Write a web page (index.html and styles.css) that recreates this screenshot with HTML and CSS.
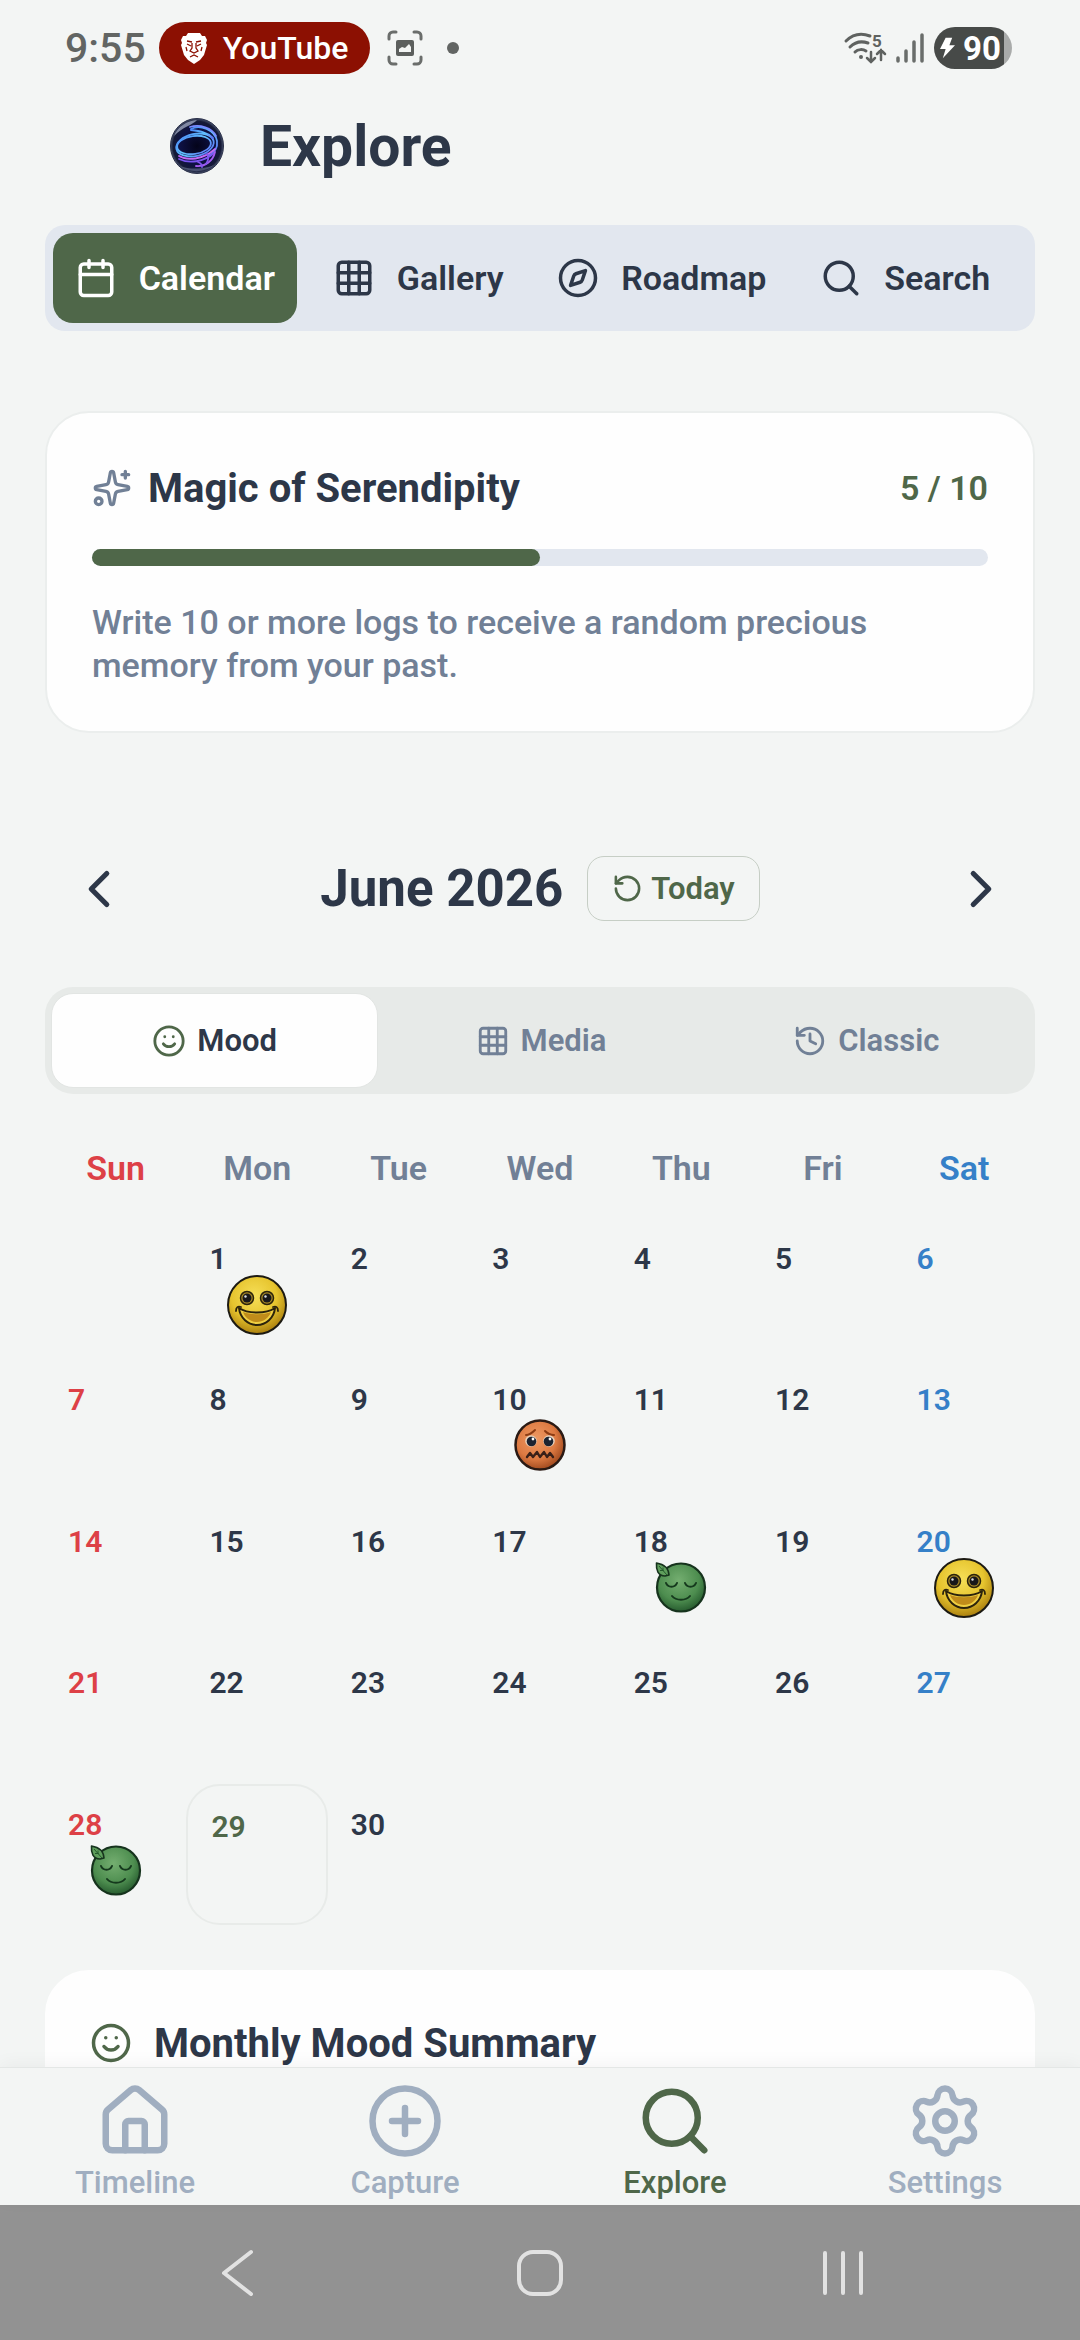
FILE: index.html
```
<!DOCTYPE html>
<html lang="en">
<head>
    <meta charset="UTF-8">
    <meta name="viewport" content="width=device-width, initial-scale=1">
    <title>Explore</title>
    <link rel="stylesheet" href="styles.css">
</head>
<body>
    <!-- shared icons and mood faces -->
    <svg class="sprite" aria-hidden="true">
        <defs>
            <radialGradient id="yellow-fill" cx="45%" cy="35%" r="65%">
                <stop offset="0" stop-color="#f6df58"/>
                <stop offset="0.6" stop-color="#e6c42e"/>
                <stop offset="1" stop-color="#ab800f"/>
            </radialGradient>
            <radialGradient id="orange-fill" cx="42%" cy="38%" r="62%">
                <stop offset="0" stop-color="#ee9a64"/>
                <stop offset="0.65" stop-color="#dd7a42"/>
                <stop offset="1" stop-color="#a44c20"/>
            </radialGradient>
            <radialGradient id="green-fill" cx="45%" cy="35%" r="65%">
                <stop offset="0" stop-color="#74ae70"/>
                <stop offset="0.65" stop-color="#4d8d4f"/>
                <stop offset="1" stop-color="#275c2f"/>
            </radialGradient>
            <radialGradient id="orb-fill" cx="50%" cy="50%" r="50%">
                <stop offset="0" stop-color="#04041a"/>
                <stop offset="0.65" stop-color="#0e1144"/>
                <stop offset="0.9" stop-color="#151a36"/>
                <stop offset="1" stop-color="#4a5470"/>
            </radialGradient>
            <linearGradient id="orb-ring" x1="0" y1="0" x2="1" y2="1">
                <stop offset="0" stop-color="#4a86f5"/>
                <stop offset="0.5" stop-color="#62c4ff"/>
                <stop offset="1" stop-color="#5c6cf5"/>
            </linearGradient>
        </defs>
        <symbol id="icon-calendar" viewBox="0 0 24 24">
            <path d="M8 2v4M16 2v4M3 10h18"/>
            <rect x="3" y="4" width="18" height="18" rx="2"/>
        </symbol>
        <symbol id="icon-grid" viewBox="0 0 24 24">
            <rect x="3" y="3" width="18" height="18" rx="2"/>
            <path d="M3 9h18M3 15h18M9 3v18M15 3v18"/>
        </symbol>
        <symbol id="icon-compass" viewBox="0 0 24 24">
            <circle cx="12" cy="12" r="10"/>
            <path d="m16.24 7.76-1.804 5.411a2 2 0 0 1-1.265 1.265L7.76 16.24l1.804-5.411a2 2 0 0 1 1.265-1.265z"/>
        </symbol>
        <symbol id="icon-search" viewBox="0 0 24 24">
            <circle cx="11" cy="11" r="8"/>
            <path d="m21 21-4.34-4.34"/>
        </symbol>
        <symbol id="icon-sparkles" viewBox="0 0 24 24">
            <path d="M11.017 2.814a1 1 0 0 1 1.966 0l1.051 5.558a2 2 0 0 0 1.594 1.594l5.558 1.051a1 1 0 0 1 0 1.966l-5.558 1.051a2 2 0 0 0-1.594 1.594l-1.051 5.558a1 1 0 0 1-1.966 0l-1.051-5.558a2 2 0 0 0-1.594-1.594l-5.558-1.051a1 1 0 0 1 0-1.966l5.558-1.051a2 2 0 0 0 1.594-1.594z"/>
            <path d="M20 2v4M22 4h-4"/>
            <circle cx="4" cy="20" r="2"/>
        </symbol>
        <symbol id="icon-left" viewBox="0 0 24 24"><path d="m15 18-6-6 6-6"/></symbol>
        <symbol id="icon-right" viewBox="0 0 24 24"><path d="m9 18 6-6-6-6"/></symbol>
        <symbol id="icon-reset" viewBox="0 0 24 24">
            <path d="M3 12a9 9 0 1 0 9-9 9.75 9.75 0 0 0-6.74 2.74L3 8"/>
            <path d="M3 3v5h5"/>
        </symbol>
        <symbol id="icon-history" viewBox="0 0 24 24">
            <path d="M3 12a9 9 0 1 0 9-9 9.75 9.75 0 0 0-6.74 2.74L3 8"/>
            <path d="M3 3v5h5M12 7v5l4 2"/>
        </symbol>
        <symbol id="icon-smile" viewBox="0 0 24 24">
            <circle cx="12" cy="12" r="10"/>
            <path d="M8 14s1.5 2 4 2 4-2 4-2M9 9h.01M15 9h.01"/>
        </symbol>
        <symbol id="icon-home" viewBox="0 0 24 24">
            <path d="M15 21v-8a1 1 0 0 0-1-1h-4a1 1 0 0 0-1 1v8"/>
            <path d="M3 10a2 2 0 0 1 .709-1.528l7-5.999a2 2 0 0 1 2.582 0l7 5.999A2 2 0 0 1 21 10v9a2 2 0 0 1-2 2H5a2 2 0 0 1-2-2z"/>
        </symbol>
        <symbol id="icon-plus" viewBox="0 0 24 24">
            <circle cx="12" cy="12" r="10"/>
            <path d="M8 12h8M12 8v8"/>
        </symbol>
        <symbol id="icon-settings" viewBox="0 0 24 24">
            <path d="M9.671 4.136a2.34 2.34 0 0 1 4.659 0 2.34 2.34 0 0 0 3.319 1.915 2.34 2.34 0 0 1 2.33 4.033 2.34 2.34 0 0 0 0 3.831 2.34 2.34 0 0 1-2.33 4.033 2.34 2.34 0 0 0-3.319 1.915 2.34 2.34 0 0 1-4.659 0 2.34 2.34 0 0 0-3.32-1.915 2.34 2.34 0 0 1-2.33-4.033 2.34 2.34 0 0 0 0-3.831A2.34 2.34 0 0 1 6.35 6.051a2.34 2.34 0 0 0 3.319-1.915"/>
            <circle cx="12" cy="12" r="3"/>
        </symbol>

        <symbol id="face-happy" viewBox="0 0 60 60">
            <circle cx="30" cy="30" r="29" fill="url(#yellow-fill)" stroke="#1c1a12" stroke-width="2"/>
            <g stroke="#2b230c" stroke-width="1.5">
                <circle cx="20" cy="23" r="6.5" fill="#a98a26"/>
                <circle cx="40" cy="23" r="6.5" fill="#a98a26"/>
            </g>
            <circle cx="20" cy="23" r="4.5" fill="#17171a"/>
            <circle cx="40" cy="23" r="4.5" fill="#17171a"/>
            <circle cx="18.5" cy="21.5" r="1.2" fill="#d8dbe0"/>
            <circle cx="38.5" cy="21.5" r="1.2" fill="#d8dbe0"/>
            <path d="M12 33c9 6 27 6 36 0-1 10-9 17-18 17s-17-7-18-17z" fill="#efcf42" stroke="#2b230c" stroke-width="2" stroke-linejoin="round"/>
            <path d="M16 37c8 3 20 3 28 0-2 6-8 10-14 10s-12-4-14-10z" fill="#c08c1a"/>
            <path d="M9 36c0-4 2-5 5-4M51 36c0-4-2-5-5-4" fill="none" stroke="#2b230c" stroke-width="1.8" stroke-linecap="round"/>
        </symbol>
        <symbol id="face-anxious" viewBox="0 0 52 52">
            <circle cx="26" cy="26" r="24.5" fill="url(#orange-fill)" stroke="#2a1a14" stroke-width="2.5"/>
            <path d="M12 16c4 0 6-2 9-5M31 12c3 3 6 4 9 4" fill="none" stroke="#8d3c14" stroke-width="2" stroke-linecap="round"/>
            <circle cx="17" cy="22" r="5.8" fill="#e8d2bd"/>
            <circle cx="35" cy="22" r="5.8" fill="#e8d2bd"/>
            <circle cx="17.5" cy="22.5" r="4.8" fill="#1b2230"/>
            <circle cx="34.5" cy="22.5" r="4.8" fill="#1b2230"/>
            <circle cx="19" cy="20" r="1.4" fill="#fff"/>
            <circle cx="36" cy="20" r="1.4" fill="#fff"/>
            <path d="M13 38l3-4 3 4 4-5 3 5 4-5 3 5 3-4 3 4" fill="none" stroke="#3a2018" stroke-width="2.4" stroke-linecap="round" stroke-linejoin="round"/>
        </symbol>
        <symbol id="face-calm" viewBox="0 0 52 52">
            <circle cx="26" cy="26.500" r="24" fill="url(#green-fill)" stroke="#16331d" stroke-width="2.2"/>
            <path d="M1.500 2c6 1 12 4 12.500 12l-4 1C3 15 1 9 1.500 2z" fill="#5f9e5c" stroke="#16331d" stroke-width="1.6" stroke-linejoin="round"/>
            <path d="M4 5l8 9M8 6.500v3.500M5 9.500h3.500" fill="none" stroke="#245a2c" stroke-width="1"/>
            <path d="M11 22c2 5 9 5 11 0M30 22c2 5 9 5 11 0" fill="none" stroke="#15391d" stroke-width="2" stroke-linecap="round"/>
            <path d="M17 35c4 5 14 5 18 0" fill="none" stroke="#15391d" stroke-width="2" stroke-linecap="round"/>
        </symbol>
    </svg>

    <div class="status-bar">
        <span class="clock">9:55</span>
        <span class="now-playing">
            <svg class="lion" viewBox="0 0 26 31">
                <path d="M7 0h12l2 3h3l2 4-1 3 1 2-3 10-4 5-6 4-6-4-4-5L0 12l1-2-1-3 2-4h3z" fill="#fff"/>
                <path d="M6 8l5 1M20 8l-5 1M6 11l4 2M20 11l-4 2M11 10v5l-2 3 4 2 4-2-2-3v-5M9 24l4-2 4 2M5 14l1 4M21 14l-1 4" fill="none" stroke="#8c1002" stroke-width="1.300"/>
            </svg>
            YouTube
        </span>
        <svg class="capture-icon" viewBox="0 0 36 36" fill="none" stroke="#6a6d6b" stroke-width="3" stroke-linecap="round">
            <path d="M2 9V6a4 4 0 0 1 4-4h3M27 2h3a4 4 0 0 1 4 4v3M34 27v3a4 4 0 0 1-4 4h-3M9 34H6a4 4 0 0 1-4-4v-3"/>
            <rect x="9" y="10" width="18" height="16" rx="2" fill="#5c5f5d" stroke="none"/>
            <path d="M12 22v-3l3-2 3 1 4-4 2 3v5z" fill="#f3f5f4" stroke="none"/>
        </svg>
        <span class="dot"></span>
        <svg class="wifi-icon" viewBox="0 0 44 32" fill="none" stroke="#5f6260" stroke-width="3" stroke-linecap="round">
            <path d="M2 9c7-7 16-8 24-5M6 15c5-5 12-6 18-4M11 20c3-3 8-3 11-1"/>
            <circle cx="17" cy="25" r="2" fill="#5f6260" stroke="none"/>
            <path d="M27 20v10M23 26l4 4 4-4M37 28V18M33 22l4-4 4 4" stroke-width="2.500"/>
            <text x="28" y="15" class="wifi-band">5</text>
        </svg>
        <svg class="signal-icon" viewBox="0 0 28 30" stroke="#6a6d6b" stroke-width="3.500" stroke-linecap="round">
            <path d="M2 25v3M10 18v10M18 9v19M26 2v26"/>
        </svg>
        <span class="battery">
            <svg class="bolt" viewBox="0 0 16 22"><path d="M6 0h7l-3 8h6L3 22l3-10H0z" fill="#fff"/></svg>90
        </span>
    </div>

    <main class="content">
        <header class="page-header">
            <svg class="orb" viewBox="0 0 54 56">
                <ellipse cx="27" cy="28" rx="26.500" ry="27.500" fill="url(#orb-fill)" stroke="#2a3048"/>
                <path d="M4 18C8 8 17 3 27 2c-4 5-15 7-23 16z" fill="#a5afc8" opacity="0.75"/>
                <path d="M10 48c9 7 25 7 34-1-8 4-24 5-34 1z" fill="#7c88a8" opacity="0.5"/>
                <g fill="none" stroke="url(#orb-ring)" stroke-width="1.800" stroke-linecap="round">
                    <ellipse cx="24" cy="27" rx="17" ry="9" transform="rotate(-8 24 27)"/>
                    <ellipse cx="25" cy="27" rx="19" ry="11" transform="rotate(-12 25 27)"/>
                    <path d="M21 11c9-5 24 1 26 12 1 7-3 12-9 15"/>
                    <path d="M20 9c10-3 22 1 26 9" stroke="#7a8cff"/>
                    <path d="M21 12c8 1 16 2 22 8"/>
                    <path d="M9 38c8 5 24 4 36-7" stroke="#c56bf5"/>
                    <path d="M9 41c10 5 25 3 35-6" stroke="#7a55f0"/>
                    <path d="M26 48c9 1 17-5 19-14" stroke="#a65cf0"/>
                    <path d="M28 44c3 1 4 3 4 5M37 36c2 3 1 7-1 10" stroke="#8257ee"/>
                </g>
            </svg>
            <h1>Explore</h1>
        </header>

        <nav class="view-tabs">
            <button class="view-tab active"><svg class="icon"><use href="#icon-calendar"/></svg>Calendar</button>
            <button class="view-tab"><svg class="icon"><use href="#icon-grid"/></svg>Gallery</button>
            <button class="view-tab"><svg class="icon"><use href="#icon-compass"/></svg>Roadmap</button>
            <button class="view-tab"><svg class="icon"><use href="#icon-search"/></svg>Search</button>
        </nav>

        <section class="card">
            <div class="card-head">
                <svg class="icon"><use href="#icon-sparkles"/></svg>
                <h2>Magic of Serendipity</h2>
                <span class="count">5 / 10</span>
            </div>
            <div class="progress"><div class="progress-fill" style="width: 50%"></div></div>
            <p>Write 10 or more logs to receive a random precious memory from your past.</p>
        </section>

        <div class="month-nav">
            <button class="arrow" aria-label="Previous month"><svg class="icon"><use href="#icon-left"/></svg></button>
            <div class="month">
                <h2>June 2026</h2>
                <button class="today-btn"><svg class="icon"><use href="#icon-reset"/></svg>Today</button>
            </div>
            <button class="arrow" aria-label="Next month"><svg class="icon"><use href="#icon-right"/></svg></button>
        </div>

        <div class="mode-tabs">
            <button class="mode-tab active"><svg class="icon"><use href="#icon-smile"/></svg>Mood</button>
            <button class="mode-tab"><svg class="icon"><use href="#icon-grid"/></svg>Media</button>
            <button class="mode-tab"><svg class="icon"><use href="#icon-history"/></svg>Classic</button>
        </div>

        <table class="calendar">
            <thead>
                <tr><th>Sun</th><th>Mon</th><th>Tue</th><th>Wed</th><th>Thu</th><th>Fri</th><th>Sat</th></tr>
            </thead>
            <tbody>
                <tr>
                    <td></td>
                    <td><button class="day">1<svg class="face face-large"><use href="#face-happy"/></svg></button></td>
                    <td><button class="day">2</button></td>
                    <td><button class="day">3</button></td>
                    <td><button class="day">4</button></td>
                    <td><button class="day">5</button></td>
                    <td><button class="day">6</button></td>
                </tr>
                <tr>
                    <td><button class="day">7</button></td>
                    <td><button class="day">8</button></td>
                    <td><button class="day">9</button></td>
                    <td><button class="day">10<svg class="face"><use href="#face-anxious"/></svg></button></td>
                    <td><button class="day">11</button></td>
                    <td><button class="day">12</button></td>
                    <td><button class="day">13</button></td>
                </tr>
                <tr>
                    <td><button class="day">14</button></td>
                    <td><button class="day">15</button></td>
                    <td><button class="day">16</button></td>
                    <td><button class="day">17</button></td>
                    <td><button class="day">18<svg class="face"><use href="#face-calm"/></svg></button></td>
                    <td><button class="day">19</button></td>
                    <td><button class="day">20<svg class="face face-large"><use href="#face-happy"/></svg></button></td>
                </tr>
                <tr>
                    <td><button class="day">21</button></td>
                    <td><button class="day">22</button></td>
                    <td><button class="day">23</button></td>
                    <td><button class="day">24</button></td>
                    <td><button class="day">25</button></td>
                    <td><button class="day">26</button></td>
                    <td><button class="day">27</button></td>
                </tr>
                <tr>
                    <td><button class="day">28<svg class="face"><use href="#face-calm"/></svg></button></td>
                    <td><button class="day today">29</button></td>
                    <td><button class="day">30</button></td>
                    <td></td>
                    <td></td>
                    <td></td>
                    <td></td>
                </tr>
            </tbody>
        </table>

        <section class="card summary">
            <div class="card-head">
                <svg class="icon"><use href="#icon-smile"/></svg>
                <h2>Monthly Mood Summary</h2>
            </div>
        </section>
    </main>

    <nav class="bottom-nav">
        <a href="#"><svg class="icon"><use href="#icon-home"/></svg>Timeline</a>
        <a href="#"><svg class="icon"><use href="#icon-plus"/></svg>Capture</a>
        <a href="#" class="active"><svg class="icon"><use href="#icon-search"/></svg>Explore</a>
        <a href="#"><svg class="icon"><use href="#icon-settings"/></svg>Settings</a>
    </nav>

    <div class="system-nav">
        <button aria-label="Back"><svg viewBox="0 0 50 50"><path d="M39 4 12 25l27 21"/></svg></button>
        <button aria-label="Home"><svg viewBox="0 0 50 50"><rect x="4" y="4" width="42" height="42" rx="14"/></svg></button>
        <button aria-label="Recent apps"><svg viewBox="0 0 50 50"><path d="M7 5v40M25 5v40M43 5v40"/></svg></button>
    </div>
</body>
</html>
```

FILE: styles.css
```
* {
    margin: 0;
    padding: 0;
    box-sizing: border-box;
}

:root {
    --bg: #f3f5f4;
    --text: #2d3748;
    --muted: #718096;
    --faint: #a0aec0;
    --green: #4f6749;
    --track: #e2e7ef;
}

body {
    height: 100vh;
    display: flex;
    flex-direction: column;
    background: var(--bg);
    color: var(--text);
    font-family: Roboto, "Noto Sans", sans-serif;
}

button {
    border: none;
    background: none;
    color: inherit;
    font: inherit;
    cursor: pointer;
}

.sprite {
    position: absolute;
    width: 0;
    height: 0;
}

.icon {
    width: 42px;
    height: 42px;
    flex-shrink: 0;
    fill: none;
    stroke: currentColor;
    stroke-width: 2;
    stroke-linecap: round;
    stroke-linejoin: round;
}

/* status bar */
.status-bar {
    display: flex;
    align-items: center;
    height: 96px;
    padding: 0 68px 0 65px;
    flex-shrink: 0;
}

.clock {
    color: #626563;
    font-size: 41px;
    font-weight: 500;
}

.now-playing {
    display: flex;
    align-items: center;
    gap: 16px;
    height: 52px;
    margin-left: 13px;
    padding: 0 22px;
    border-radius: 26px;
    background: #8c1002;
    color: #fff;
    font-size: 32px;
    font-weight: 500;
}

.lion {
    width: 26px;
    height: 31px;
}

.capture-icon {
    width: 36px;
    height: 36px;
    margin-left: 17px;
}

.dot {
    width: 12px;
    height: 12px;
    margin: 0 auto 0 24px;
    border-radius: 50%;
    background: #626563;
}

.wifi-icon {
    width: 44px;
    height: 32px;
    overflow: visible;
}

.wifi-band {
    fill: #5f6260;
    stroke: none;
    font-size: 17px;
    font-weight: 700;
}

.signal-icon {
    width: 28px;
    height: 30px;
    margin: 0 10px 0 8px;
}

.battery {
    display: flex;
    align-items: center;
    gap: 8px;
    width: 78px;
    height: 42px;
    padding-left: 6px;
    border-radius: 21px;
    background: linear-gradient(90deg, #474a48 90%, #a9abaa 90%);
    color: #fff;
    font-size: 33px;
    font-weight: 700;
}

.bolt {
    width: 15px;
    height: 22px;
}

/* page */
.content {
    flex: 1;
    min-height: 0;
    overflow: hidden;
    padding: 0 45px;
}

.page-header {
    display: flex;
    align-items: center;
    gap: 36px;
    height: 100px;
    padding-left: 125px;
}

.page-header h1 {
    font-size: 57px;
    font-weight: 700;
}

.orb {
    width: 54px;
    height: 56px;
}

.view-tabs {
    display: flex;
    margin-top: 29px;
    padding: 8px;
    border-radius: 20px;
    background: var(--track);
}

.view-tab {
    flex: 1;
    display: flex;
    align-items: center;
    justify-content: center;
    gap: 22px;
    height: 90px;
    border-radius: 20px;
    font-size: 34px;
    font-weight: 600;
}

.view-tab.active {
    background: var(--green);
    color: #fff;
}

.card {
    margin-top: 80px;
    padding: 44px 45px;
    border: 2px solid #ebeeed;
    border-radius: 44px;
    background: #fefefe;
}

.card-head {
    display: flex;
    align-items: center;
    gap: 16px;
    height: 62px;
}

.card-head .icon {
    width: 40px;
    height: 40px;
    color: var(--muted);
}

.card-head h2 {
    font-size: 40px;
    font-weight: 700;
}

.count {
    margin-left: auto;
    color: var(--green);
    font-size: 34px;
    font-weight: 600;
}

.progress {
    height: 17px;
    margin: 30px 0 35px;
    border-radius: 9px;
    background: var(--track);
}

.progress-fill {
    height: 100%;
    border-radius: 9px;
    background: var(--green);
}

.card p {
    color: var(--muted);
    font-size: 34px;
    font-weight: 500;
    line-height: 43px;
}

.month-nav {
    display: flex;
    align-items: center;
    justify-content: space-between;
    margin-top: 123px;
    padding: 0 23px;
}

.arrow,
.arrow .icon {
    display: block;
    width: 62px;
    height: 62px;
}

.month {
    display: flex;
    align-items: center;
    gap: 24px;
}

.month h2 {
    font-size: 51px;
    font-weight: 700;
}

.today-btn {
    display: flex;
    align-items: center;
    gap: 8px;
    height: 65px;
    padding: 0 24px;
    border: 1px solid #c6cec5;
    border-radius: 17px;
    color: var(--green);
    font-size: 31px;
    font-weight: 600;
}

.today-btn .icon {
    width: 31px;
    height: 31px;
}

.mode-tabs {
    display: flex;
    margin-top: 66px;
    padding: 6px;
    border-radius: 28px;
    background: #e7eae8;
}

.mode-tab {
    flex: 1;
    display: flex;
    align-items: center;
    justify-content: center;
    gap: 11px;
    height: 95px;
    border-radius: 22px;
    color: var(--muted);
    font-size: 31px;
    font-weight: 600;
}

.mode-tab .icon {
    width: 34px;
    height: 34px;
}

.mode-tab.active {
    border: 1px solid #e2e5e3;
    background: #fefefe;
    color: var(--text);
}

.mode-tab.active .icon {
    color: var(--green);
}

/* calendar */
.calendar {
    width: 100%;
    margin-top: 42px;
    border-collapse: collapse;
    table-layout: fixed;
}

.calendar th {
    height: 82px;
    padding-bottom: 18px;
    color: var(--muted);
    font-size: 34px;
    font-weight: 600;
}

.day {
    display: flex;
    flex-direction: column;
    width: 100%;
    aspect-ratio: 1;
    padding: 25px 23px 0;
    font-size: 30px;
    font-weight: 600;
    line-height: 32px;
    text-align: left;
}

.face {
    width: 52px;
    height: 52px;
    margin: 3px auto 0;
    flex-shrink: 0;
}

.face-large {
    width: 60px;
    height: 60px;
    margin-top: 0;
}

.day.today {
    border: 2px solid #e8ebe9;
    border-radius: 34px;
    color: var(--green);
}

.calendar th:first-child,
.calendar td:first-child {
    color: #dd4046;
}

.calendar th:last-child,
.calendar td:last-child {
    color: #3580c8;
}

.summary {
    margin-top: 45px;
    padding: 40px 43px;
    border-color: #fefefe;
}

.summary .card-head {
    gap: 22px;
}

.summary .icon {
    width: 42px;
    height: 42px;
    color: var(--green);
}

/* app navigation */
.bottom-nav {
    position: relative;
    display: flex;
    flex-shrink: 0;
    height: 138px;
    border-top: 1px solid #e4e7e6;
    background: var(--bg);
    box-shadow: 0 -4px 16px rgba(0, 0, 0, 0.04);
}

.bottom-nav a {
    flex: 1;
    display: flex;
    flex-direction: column;
    align-items: center;
    padding-top: 14px;
    color: var(--faint);
    font-size: 31px;
    font-weight: 500;
    line-height: 46px;
    text-decoration: none;
}

.bottom-nav .icon {
    width: 78px;
    height: 78px;
}

.bottom-nav .active {
    color: var(--green);
}

.system-nav {
    display: flex;
    align-items: center;
    justify-content: center;
    gap: 253px;
    flex-shrink: 0;
    height: 135px;
    background: #929292;
}

.system-nav svg {
    display: block;
    width: 50px;
    height: 50px;
    fill: none;
    stroke: #e2e2e2;
    stroke-width: 4;
    stroke-linecap: round;
    stroke-linejoin: round;
}
```
